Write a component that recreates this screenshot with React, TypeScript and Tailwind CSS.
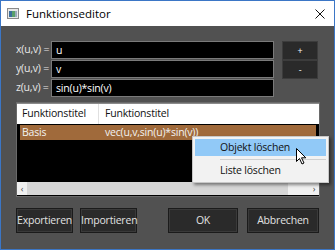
import React from "react";

const fields = [
  { label: "x(u,v) =", value: "u" },
  { label: "y(u,v) =", value: "v" },
  { label: "z(u,v) =", value: "sin(u)*sin(v)" },
];

const DarkButton = ({ children, className = "" }: { children: React.ReactNode; className?: string }) => (
  <button
    className={`h-[25px] bg-[#2a2a2a] border border-[#1b1b1b] shadow-[inset_0_0_0_1px_#3a3a3a] text-[#e2e2e2] text-[10.5px] tracking-[-0.2px] ${className}`}
  >
    {children}
  </button>
);

const App = () => {
  return (
    <div className="relative w-[335px] h-[250px] border border-[#3b76c6] flex flex-col font-['Open_Sans',sans-serif] text-[10.5px] tracking-[-0.2px] overflow-hidden">
      {/* title bar */}
      <div className="h-[25px] bg-white flex items-center pl-[6px] pr-[9px] shrink-0">
        <svg width="12" height="11" viewBox="0 0 12 11" className="mr-[7px]">
          <rect x="0.5" y="0.5" width="11" height="10" fill="#e8e8e8" stroke="#8a8a8a" />
          <rect x="2" y="3" width="3" height="6" fill="#3c6e9c" />
          <rect x="5" y="3" width="3" height="6" fill="#5aa06a" />
          <rect x="8" y="3" width="2" height="6" fill="#9ab" />
        </svg>
        <span className="text-[11.5px] tracking-normal text-black">Funktionseditor</span>
        <svg width="10" height="10" viewBox="0 0 10 10" className="ml-auto">
          <path d="M0.5 0.5 L9.5 9.5 M9.5 0.5 L0.5 9.5" stroke="#111" strokeWidth="1" />
        </svg>
      </div>

      {/* body */}
      <div className="flex-1 bg-[#515151] pl-[15px] pr-[15px] pt-[15px] flex flex-col">
        <div className="flex">
          <div className="flex flex-col gap-[1px] w-[258px]">
            {fields.map((f) => (
              <div key={f.label} className="flex items-center h-[18px]">
                <span className="w-[35px] text-[#e8e8e8] whitespace-nowrap">{f.label}</span>
                <div className="flex-1 h-[18px] bg-black border border-[#7a7a7a] text-white pl-[4px] leading-[16px]">
                  {f.value}
                </div>
              </div>
            ))}
          </div>
          <div className="ml-[8px] flex flex-col">
            <button className="w-[36px] h-[19px] bg-[#2a2a2a] border border-[#3c3c3c] text-white text-[9px] leading-none">+</button>
            <button className="w-[36px] h-[19px] bg-[#2a2a2a] border border-[#3c3c3c] text-white text-[9px] leading-none">-</button>
          </div>
        </div>

        {/* list */}
        <div className="mt-[5px] w-[304px] h-[95px] border border-[#6a6a6a] bg-black flex flex-col">
          <div className="h-[21px] bg-white flex items-center text-[#111] border-t border-[#8a8a8a]">
            <div className="w-[82px] pl-[5px] border-r border-[#e0e0e0] h-full flex items-center">Funktionstitel</div>
            <div className="pl-[6px]">Funktionstitel</div>
          </div>
          <div className="mt-[1px] ml-[3px] w-[296px] h-[15px] bg-[#a06a3b] flex items-center text-[#f2f2f2]">
            <div className="w-[79px] pl-[2px]">Basis</div>
            <div className="pl-[6px]">vec(u,v,sin(u)*sin(v))</div>
          </div>
          <div className="flex-1" />
          <div className="h-[13px] mb-[1px] flex bg-[#f0f0f0]">
            <div className="w-[10px] flex items-center justify-center text-[#444] text-[9px]">‹</div>
            <div className="w-[261px] bg-[#d6d6d6]" />
            <div className="flex-1" />
            <div className="w-[10px] flex items-center justify-center text-[#444] text-[9px]">›</div>
          </div>
        </div>

        {/* bottom buttons */}
        <div className="mt-[11px] flex">
          <DarkButton className="w-[57px]">Exportieren</DarkButton>
          <DarkButton className="w-[57px] ml-[7px]">Importieren</DarkButton>
          <DarkButton className="w-[70px] ml-[31px]">OK</DarkButton>
          <DarkButton className="w-[72px] ml-[9px]">Abbrechen</DarkButton>
        </div>
      </div>

      {/* context menu */}
      <div className="absolute left-[191px] top-[135px] w-[137px] h-[47px] bg-[#f2f2f2] border border-[#c8c8c8] shadow-[2px_2px_3px_rgba(0,0,0,0.45)] p-[2px] flex flex-col text-[#111]">
        <div className="h-[17px] bg-[#91c9f7] flex items-center pl-[25px]">Objekt löschen</div>
        <div className="h-[1px] bg-[#d0d0d0] ml-[25px] mt-[3px]" />
        <div className="h-[18px] flex items-center pl-[25px] mt-[2px]">Liste löschen</div>
      </div>

      {/* mouse cursor */}
      <svg width="12" height="18" viewBox="0 0 12 18" className="absolute left-[295px] top-[147px]">
        <path d="M0.5 0.5 L0.5 13.5 L3.5 10.5 L6 16 L8 15 L5.5 9.8 L9.8 9.8 Z" fill="white" stroke="black" strokeWidth="1" />
      </svg>
    </div>
  );
};

export default App;
